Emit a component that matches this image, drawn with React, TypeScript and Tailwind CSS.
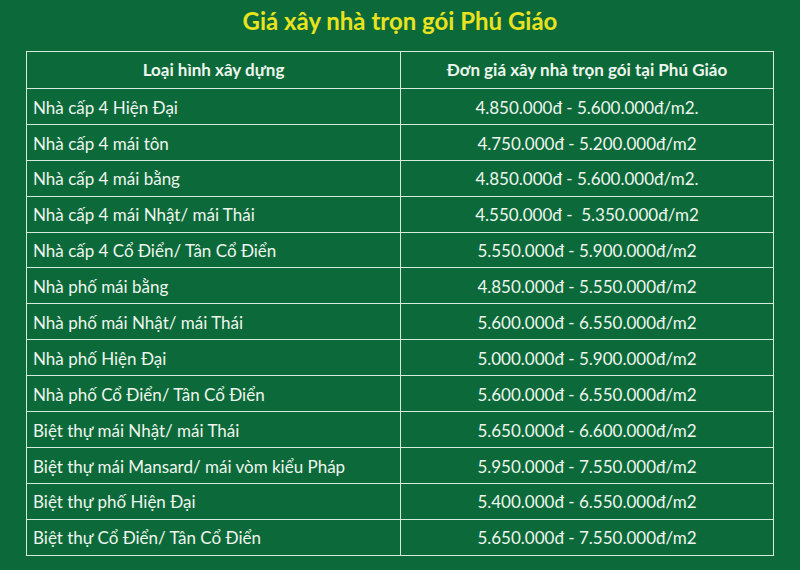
const rows = [
  ["Nhà cấp 4 Hiện Đại", "4.850.000đ - 5.600.000đ/m2."],
  ["Nhà cấp 4 mái tôn", "4.750.000đ - 5.200.000đ/m2"],
  ["Nhà cấp 4 mái bằng", "4.850.000đ - 5.600.000đ/m2."],
  ["Nhà cấp 4 mái Nhật/ mái Thái", "4.550.000đ -  5.350.000đ/m2"],
  ["Nhà cấp 4 Cổ Điển/ Tân Cổ Điển", "5.550.000đ - 5.900.000đ/m2"],
  ["Nhà phố mái bằng", "4.850.000đ - 5.550.000đ/m2"],
  ["Nhà phố mái Nhật/ mái Thái", "5.600.000đ - 6.550.000đ/m2"],
  ["Nhà phố Hiện Đại", "5.000.000đ - 5.900.000đ/m2"],
  ["Nhà phố Cổ Điển/ Tân Cổ Điển", "5.600.000đ - 6.550.000đ/m2"],
  ["Biệt thự mái Nhật/ mái Thái", "5.650.000đ - 6.600.000đ/m2"],
  ["Biệt thự mái Mansard/ mái vòm kiểu Pháp", "5.950.000đ - 7.550.000đ/m2"],
  ["Biệt thự phố Hiện Đại", "5.400.000đ - 6.550.000đ/m2"],
  ["Biệt thự Cổ Điển/ Tân Cổ Điển", "5.650.000đ - 7.550.000đ/m2"],
];

export default function App() {
  return (
    <div className="h-[570px] w-[800px] bg-[#0c6a3a] pt-[6px] font-['Lato','Open_Sans',sans-serif] text-[#eef6ee]">
      <h1 className="h-[45px] text-center text-[24px] font-bold leading-[30px] text-[#e8e31e]">
        Giá xây nhà trọn gói Phú Giáo
      </h1>
      <table className="ml-[26px] w-[748px] border-collapse text-[17px]">
        <thead>
          <tr className="h-[37px]">
            <th className="w-[374px] border border-[#d6ebd9] font-bold">Loại hình xây dựng</th>
            <th className="border border-[#d6ebd9] font-bold">Đơn giá xây nhà trọn gói tại Phú Giáo</th>
          </tr>
        </thead>
        <tbody>
          {rows.map(([k, v]) => (
            <tr key={k} className="h-[35.9px]">
              <td className="border border-[#d6ebd9] px-[6px] pt-[2px]">{k}</td>
              <td className="whitespace-pre border border-[#d6ebd9] pt-[2px] text-center">{v}</td>
            </tr>
          ))}
        </tbody>
      </table>
    </div>
  );
}
